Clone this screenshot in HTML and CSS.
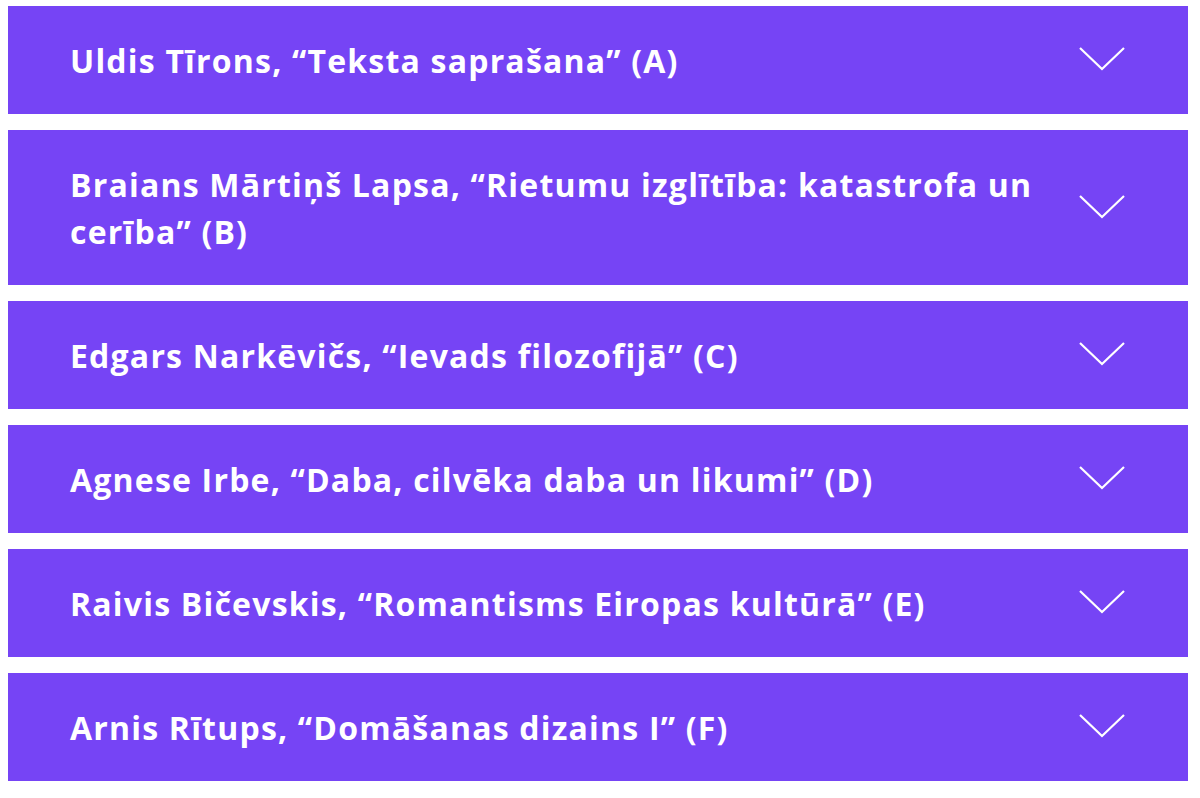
FILE: index.html
```html
<!DOCTYPE html>
<html lang="lv">
<head>
<meta charset="utf-8">
<link rel="stylesheet" href="styles.css">
</head>
<body>
<div class="list">
  <div class="item"><div class="title">Uldis Tīrons, “Teksta saprašana” (A)</div><svg class="chev" viewBox="0 0 46 24"><path d="M1 1 L23 22 L45 1"/></svg></div>
  <div class="item"><div class="title">Braians Mārtiņš Lapsa, “Rietumu izglītība: katastrofa un cerība” (B)</div><svg class="chev" viewBox="0 0 46 24"><path d="M1 1 L23 22 L45 1"/></svg></div>
  <div class="item"><div class="title">Edgars Narkēvičs, “Ievads filozofijā” (C)</div><svg class="chev" viewBox="0 0 46 24"><path d="M1 1 L23 22 L45 1"/></svg></div>
  <div class="item"><div class="title">Agnese Irbe, “Daba, cilvēka daba un likumi” (D)</div><svg class="chev" viewBox="0 0 46 24"><path d="M1 1 L23 22 L45 1"/></svg></div>
  <div class="item"><div class="title">Raivis Bičevskis, “Romantisms Eiropas kultūrā” (E)</div><svg class="chev" viewBox="0 0 46 24"><path d="M1 1 L23 22 L45 1"/></svg></div>
  <div class="item"><div class="title">Arnis Rītups, “Domāšanas dizains I” (F)</div><svg class="chev" viewBox="0 0 46 24"><path d="M1 1 L23 22 L45 1"/></svg></div>
</div>
</body>
</html>
```
FILE: styles.css
```css
html, body { margin: 0; padding: 0; background: #fff; }
.list {
  display: flex;
  flex-direction: column;
  gap: 16px;
  padding: 6px 12px 0 8px;
}
.item {
  background: #7644f5;
  display: flex;
  align-items: center;
  padding: 31px 63px 30px 62px;
  gap: 30px;
}
.title {
  flex: 1;
  color: #fff;
  font-family: "Open Sans", "Noto Sans", sans-serif;
  font-weight: 700;
  font-size: 32px;
  line-height: 47px;
  letter-spacing: 1.2px;
}
.chev {
  width: 46px;
  height: 24px;
  flex: none;
  margin-top: -3px;
}
.chev path {
  fill: none;
  stroke: #fff;
  stroke-width: 2.2;
}
```
